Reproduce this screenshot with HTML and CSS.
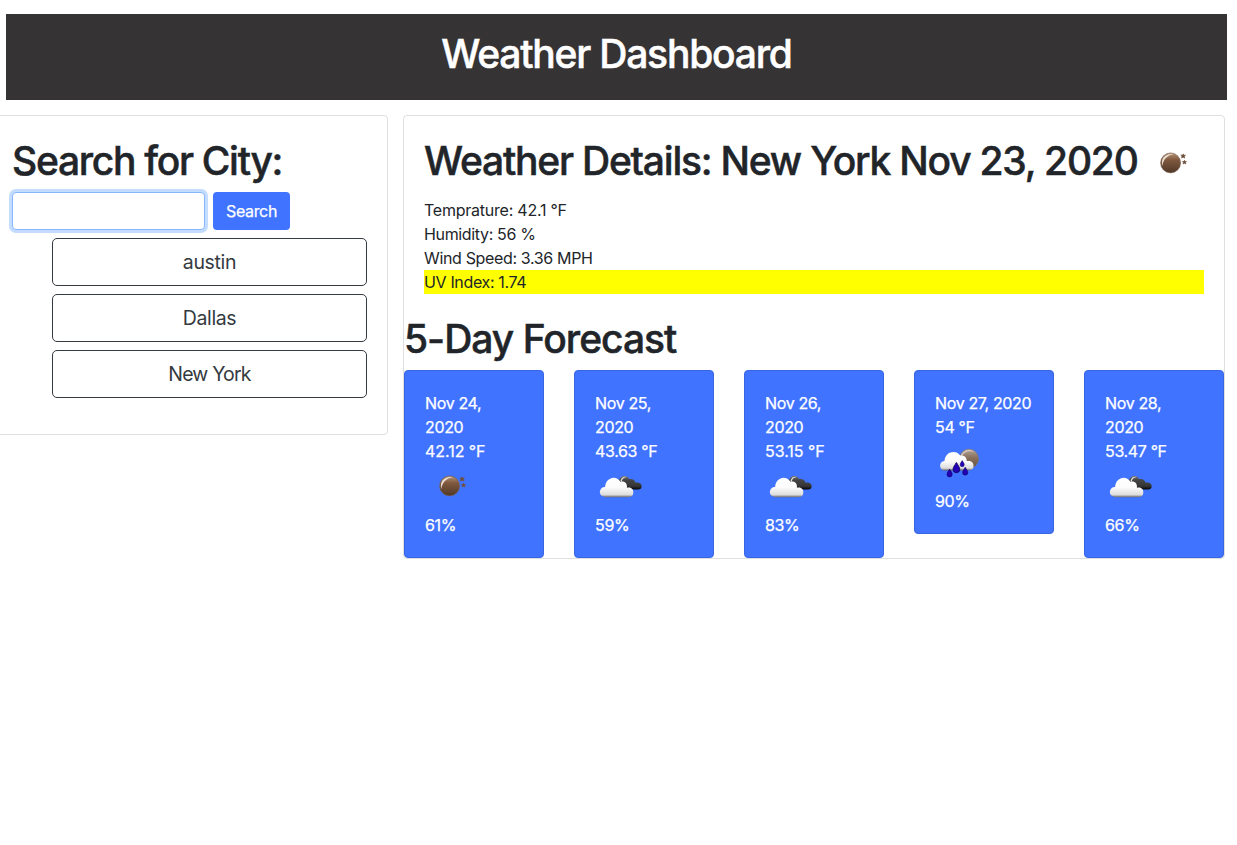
FILE: index.html
```html
<!DOCTYPE html>
<html lang="en">
<head>
<meta charset="utf-8">
<title>Weather Dashboard</title>
<link rel="stylesheet" href="styles.css">
</head>
<body>
<svg class="defs" width="0" height="0" aria-hidden="true">
  <defs>
    <linearGradient id="moonFill" x1="0" y1="0" x2="0" y2="1"><stop offset="0" stop-color="#b59376"/><stop offset=".35" stop-color="#80593f"/><stop offset="1" stop-color="#503828"/></linearGradient>
    <linearGradient id="moonPale" x1="0" y1="0" x2="0" y2="1"><stop offset="0" stop-color="#b5a597"/><stop offset=".45" stop-color="#88705d"/><stop offset="1" stop-color="#64503f"/></linearGradient>
    <linearGradient id="cloudFill" x1="0" y1="0" x2="0" y2="1"><stop offset="0" stop-color="#fff"/><stop offset=".5" stop-color="#fcfcfc"/><stop offset=".88" stop-color="#dcdcdc"/><stop offset="1" stop-color="#666"/></linearGradient>
    <linearGradient id="darkFill" x1="0" y1="0" x2="0" y2="1"><stop offset="0" stop-color="#777"/><stop offset=".3" stop-color="#444"/><stop offset=".75" stop-color="#363636"/><stop offset="1" stop-color="#050505"/></linearGradient>
    <path id="drop" d="M0-4.2C.9-2.5 2.7-.4 2.7 1.3A2.7 2.7 0 0 1-2.7 1.3C-2.7-.4-.9-2.5 0-4.2Z" fill="#2300b5" stroke="#100060" stroke-width=".7"/>
    <symbol id="clear" viewBox="0 0 50 50">
      <circle cx="24.6" cy="22.9" r="10" fill="url(#moonFill)" stroke="#79604d" stroke-width=".6"/>
      <path d="M16.3 26C14.2 18.3 20 13 27.5 14.3C21.3 15.4 17.4 19.2 16.3 26Z" fill="#f3e9df" opacity=".9"/>
      <path d="M37.2 13.9l.6 1.3 1.7.1-1.2 1 .5 1.7-1.6-.8-1.6.8.4-1.7-1.2-1 1.7-.1ZM38.5 20.3l.5 1.2 1.5.1-1.1.9.4 1.5-1.3-.8-1.4.8.4-1.5-1.1-.9 1.5-.1Z" fill="#654834" stroke="#75543f" stroke-width=".7"/>
    </symbol>
    <symbol id="cloudy" viewBox="0 0 50 50">
      <path d="M25 26C22.8 22 23 17 25.8 14.4C28.5 12 32.6 13 34.2 16.1C37.5 15.3 40 17 40.3 19.6C44 18.9 46.7 20.4 46.7 23.2C46.7 25.4 45.2 26.4 43 26.4H33Z" fill="url(#darkFill)"/>
      <path d="M25.4 18C26.2 14.4 29.2 13 31.7 14.1C28.8 14.5 27.1 16 26.6 19Z" fill="#ddd"/>
      <path d="M8.5 33.6C2.7 32.2 4.3 23.8 10.1 24.1C10.5 14.6 21 11.4 25.4 18.8C29.7 17.7 32.6 20.6 31.9 24.8C36.1 23.6 38.7 26.4 38.3 29.8C38 33 36.5 34.2 33 34.2H10Z" fill="url(#cloudFill)"/>
    </symbol>
    <symbol id="rain" viewBox="0 0 50 50">
      <g transform="translate(0 .7)">
      <circle cx="34" cy="19" r="9.6" fill="url(#moonPale)" stroke="#857260" stroke-width=".5"/>
      <path d="M25.6 16C28 10.2 35 8.6 39.3 12C34 10.5 29 12 26.8 17Z" fill="#ddd4cc" opacity=".75"/>
      <path d="M9.4 30.7C3.7 30.3 3.6 21.7 9.5 21.3C9.9 12.4 20.5 9.3 25.2 15.8C29.3 15.4 31.9 17.6 31.7 21.4C35.4 20.5 38.8 22.4 38.5 26.1C38.5 29.4 37 30.7 33.5 30.7Z" fill="url(#cloudFill)"/>
      <use href="#drop" transform="translate(21.4 28) scale(1.25)"/>
      <use href="#drop" transform="translate(27.2 24) scale(.75)"/>
      <use href="#drop" transform="translate(14.6 33.4) scale(.95)"/>
      <use href="#drop" transform="translate(30.2 31.6) scale(.95)"/>
      </g>
    </symbol>
  </defs>
</svg>

<header class="banner"><h1 class="title">Weather Dashboard</h1></header>

<main class="layout">
  <section class="card search-card">
    <h1 class="title search-title">Search for City:</h1>
    <form class="search-form">
      <input class="search-input" type="text" aria-label="City">
      <button class="search-button" type="button">Search</button>
    </form>
    <div class="history">
      <button class="city" type="button">austin</button>
      <button class="city" type="button">Dallas</button>
      <button class="city city-wide" type="button">New York</button>
    </div>
  </section>

  <section class="card">
    <div class="details">
      <div class="details-head">
        <h1 class="title">Weather Details: New York Nov 23, 2020</h1>
        <svg class="icon"><use href="#clear"/></svg>
      </div>
      <p class="line temp">Temprature: 42.1 °F</p>
      <p class="line">Humidity: 56 %</p>
      <p class="line">Wind Speed: 3.36 MPH</p>
      <p class="line uv">UV Index: 1.74</p>
    </div>
    <h1 class="title forecast-title">5-Day Forecast</h1>
    <div class="forecast">
      <article class="day"><p class="line">Nov 24,<br>2020</p><p class="line day-temp">42.12 °F</p><svg class="icon"><use href="#clear"/></svg><p class="line">61%</p></article>
      <article class="day"><p class="line">Nov 25,<br>2020</p><p class="line">43.63 °F</p><svg class="icon"><use href="#cloudy"/></svg><p class="line">59%</p></article>
      <article class="day"><p class="line">Nov 26,<br>2020</p><p class="line day-temp">53.15 °F</p><svg class="icon"><use href="#cloudy"/></svg><p class="line">83%</p></article>
      <article class="day"><p class="line">Nov 27, 2020</p><p class="line">54 °F</p><svg class="icon"><use href="#rain"/></svg><p class="line">90%</p></article>
      <article class="day"><p class="line">Nov 28,<br>2020</p><p class="line">53.47 °F</p><svg class="icon"><use href="#cloudy"/></svg><p class="line">66%</p></article>
    </div>
  </section>
</main>
</body>
</html>
```
FILE: styles.css
```css
* { box-sizing: border-box; }
html { overflow: hidden; }
body {
  margin: 0;
  padding-top: 14px;
  background: #fff;
  color: #212529;
  font: 400 16px/24px Inter, "Liberation Sans", sans-serif;
  letter-spacing: -0.35px;
}
.defs { position: absolute; }
.title {
  margin: 0;
  font-size: 39px;
  font-weight: 500;
  line-height: 48px;
  letter-spacing: -1.22px;
  white-space: nowrap;
  -webkit-text-stroke: 0.5px currentColor;
}
.search-title { letter-spacing: -1.3px; }
.forecast-title { letter-spacing: -1px; }
.banner {
  height: 86px;
  margin: 0 10px 0 6px;
  padding-top: 16px;
  background: #363334;
  color: #fff;
  text-align: center;
}
.layout {
  display: grid;
  grid-template-columns: 397px 822px;
  gap: 15px;
  align-items: start;
  margin: 15px 0 0 -9px;
}
.card {
  border: 1px solid #dfdfdf;
  border-radius: 4px;
}
.search-card { height: 320px; padding: 21px 20px 20px; }
.search-form { display: flex; gap: 8px; margin-top: 7px; }
.search-input {
  width: 193px;
  height: 38px;
  border: 1px solid #86b7fe;
  border-radius: 4px;
  outline: 0;
  box-shadow: 0 0 0 3px #c4dcff;
}
.search-button {
  width: 77px;
  height: 38px;
  padding: 0;
  border: 0;
  border-radius: 4px;
  background: #4073ff;
  color: #fff;
  font: inherit;
  letter-spacing: inherit;
  -webkit-text-stroke: 0.25px currentColor;
}
.history { display: grid; gap: 8px; margin: 8px 0 0 40px; }
.city {
  height: 48px;
  padding: 0;
  border: 1px solid #343a40;
  border-radius: 5px;
  background: transparent;
  color: #343a40;
  font: 400 19.5px/30px Inter, "Liberation Sans", sans-serif;
  letter-spacing: -0.35px;
}
.city-wide { letter-spacing: -0.8px; }
.details { padding: 21px 20px 21px; }
.details-head { display: flex; height: 61px; }
.details-head .icon { margin: 3px 0 0 8px; }
.icon { display: block; flex: none; width: 50px; height: 50px; }
.line { margin: 0; white-space: nowrap; }
.temp { letter-spacing: -0.23px; }
.day-temp { letter-spacing: -0.05px; }
.uv { background: #ff0; }
.forecast { display: flex; gap: 30px; align-items: flex-start; margin-top: 7px; }
.day {
  width: 140px;
  padding: 20px;
  border: 1px solid #3766e0;
  border-radius: 4px;
  background: #4073ff;
  color: #fff;
  -webkit-text-stroke: 0.25px currentColor;
}
```
